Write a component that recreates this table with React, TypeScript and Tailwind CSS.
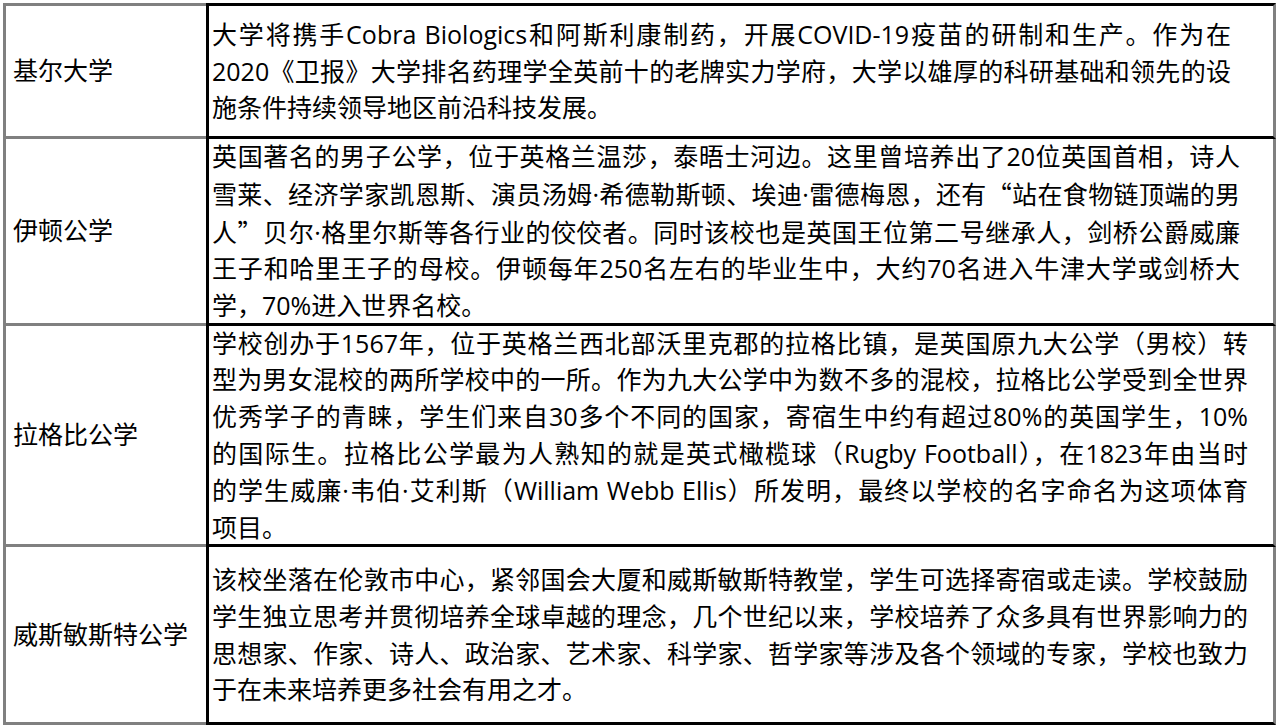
import React from 'react';

type Row = {
  name: string;
  lines: string[];
  h: string;
  pr: string;
};

const rows: Row[] = [
  {
    name: '基尔大学',
    h: 'h-[136px]',
    pr: 'pr-[42px]',
    lines: [
      '大学将携手Cobra Biologics和阿斯利康制药，开展COVID-19疫苗的研制和生产。作为在',
      '2020《卫报》大学排名药理学全英前十的老牌实力学府，大学以雄厚的科研基础和领先的设',
      '施条件持续领导地区前沿科技发展。',
    ],
  },
  {
    name: '伊顿公学',
    h: 'h-[187px]',
    pr: 'pr-[33px]',
    lines: [
      '英国著名的男子公学，位于英格兰温莎，泰晤士河边。这里曾培养出了20位英国首相，诗人',
      '雪莱、经济学家凯恩斯、演员汤姆·希德勒斯顿、埃迪·雷德梅恩，还有“站在食物链顶端的男',
      '人”贝尔·格里尔斯等各行业的佼佼者。同时该校也是英国王位第二号继承人，剑桥公爵威廉',
      '王子和哈里王子的母校。伊顿每年250名左右的毕业生中，大约70名进入牛津大学或剑桥大',
      '学，70%进入世界名校。',
    ],
  },
  {
    name: '拉格比公学',
    h: 'h-[221px]',
    pr: 'pr-[25px]',
    lines: [
      '学校创办于1567年，位于英格兰西北部沃里克郡的拉格比镇，是英国原九大公学（男校）转',
      '型为男女混校的两所学校中的一所。作为九大公学中为数不多的混校，拉格比公学受到全世界',
      '优秀学子的青睐，学生们来自30多个不同的国家，寄宿生中约有超过80%的英国学生，10%',
      '的国际生。拉格比公学最为人熟知的就是英式橄榄球（Rugby Football），在1823年由当时',
      '的学生威廉·韦伯·艾利斯（William Webb Ellis）所发明，最终以学校的名字命名为这项体育',
      '项目。',
    ],
  },
  {
    name: '威斯敏斯特公学',
    h: 'h-[178px]',
    pr: 'pr-[25px]',
    lines: [
      '该校坐落在伦敦市中心，紧邻国会大厦和威斯敏斯特教堂，学生可选择寄宿或走读。学校鼓励',
      '学生独立思考并贯彻培养全球卓越的理念，几个世纪以来，学校培养了众多具有世界影响力的',
      '思想家、作家、诗人、政治家、艺术家、科学家、哲学家等涉及各个领域的专家，学校也致力',
      '于在未来培养更多社会有用之才。',
    ],
  },
];

// curly quotes should be full-width, so take them from the CJK font
function withQuotes(s: string) {
  return s.split(/([“”])/).map((part, k) =>
    part === '“' || part === '”' ? (
      <span key={k} style={{ fontFamily: '"Noto Sans CJK SC", sans-serif' }}>
        {part}
      </span>
    ) : (
      <React.Fragment key={k}>{part}</React.Fragment>
    )
  );
}

export default function App() {
  return (
    <div
      className="w-[1280px] h-[728px] bg-white pt-[3px] pl-[3px] overflow-hidden text-black"
      style={{ fontFamily: '"Open Sans", "Noto Sans CJK SC", sans-serif' }}
    >
      <div className="w-[1273px] flex flex-col">
        {rows.map((r, i) => (
          <div key={r.name} className={`flex ${r.h}`}>
            <div
              className={`w-[203px] shrink-0 flex items-center pl-[7px] text-[25px] border-l-[3px] border-b-[3px] border-[#808080] ${
                i === 0 ? 'border-t-[3px]' : ''
              }`}
            >
              {r.name}
            </div>
            <div
              className={`flex-1 flex flex-col justify-center pl-[3px] ${r.pr} text-[25px] leading-[36.8px] border-l-[3px] border-b-[3px] border-black border-r-[3px] border-r-[#808080] ${
                i === 0 ? 'border-t-[3px]' : ''
              }`}
            >
              {r.lines.map((l, j) => (
                <div
                  key={j}
                  className={`whitespace-nowrap ${
                    j < r.lines.length - 1 ? 'text-justify [text-align-last:justify]' : ''
                  }`}
                >
                  {withQuotes(l)}
                </div>
              ))}
            </div>
          </div>
        ))}
      </div>
    </div>
  );
}
